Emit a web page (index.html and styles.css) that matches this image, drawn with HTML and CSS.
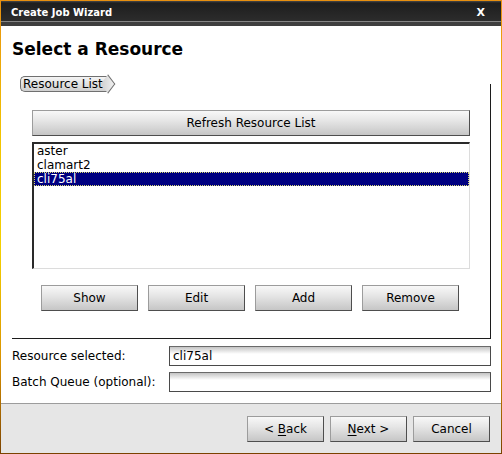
FILE: index.html
```html
<!DOCTYPE html>
<html>
<head>
<meta charset="utf-8">
<link rel="stylesheet" href="styles.css">
</head>
<body>
<div class="window">
  <div class="titlebar">
    <span class="title">Create Job Wizard</span>
    <span class="close">X</span>
  </div>
  <div class="content">
    <h1 class="heading">Select a Resource</h1>
    <div class="crumb"><span class="crumb-label">Resource List</span></div>
    <div class="panel">
      <button class="btn btn-wide">Refresh Resource List</button>
      <ul class="list">
        <li class="item">aster</li>
        <li class="item">clamart2</li>
        <li class="item selected">cli75al</li>
      </ul>
      <div class="actions">
        <button class="btn btn-action">Show</button>
        <button class="btn btn-action">Edit</button>
        <button class="btn btn-action">Add</button>
        <button class="btn btn-action">Remove</button>
      </div>
    </div>
    <div class="form">
      <div class="row">
        <label class="label">Resource selected:</label>
        <div class="input">cli75al</div>
      </div>
      <div class="row">
        <label class="label">Batch Queue (optional):</label>
        <div class="input"></div>
      </div>
    </div>
  </div>
  <div class="footer">
    <button class="btn btn-nav">&lt; <u>B</u>ack</button>
    <button class="btn btn-nav"><u>N</u>ext &gt;</button>
    <button class="btn btn-nav">Cancel</button>
  </div>
</div>
</body>
</html>
```

FILE: styles.css
```css
* { box-sizing: border-box; }
html, body { margin: 0; padding: 0; }
body {
  width: 502px;
  height: 454px;
  font-family: "DejaVu Sans", "Noto Sans", sans-serif;
  font-size: 12px;
  color: #000;
  background: #fff;
}
.window {
  width: 502px;
  height: 454px;
  padding: 1px;
  display: flex;
  flex-direction: column;
  background: linear-gradient(to bottom, #e89010 0px, #f2c400 30%, #f4d000 55%, #d89000 80%, #7a4200 100%);
}
.titlebar {
  height: 25px;
  flex: none;
  display: flex;
  align-items: flex-start;
  justify-content: space-between;
  padding: 5px 16px 0 10px;
  background: linear-gradient(to bottom, #4a4a4a 0px, #1e1e1e 2px, #2c2c2c 20px, #858585 20px, #858585 21px, #3e3e3e 21px, #3e3e3e 25px);
  color: #fff;
}
.title {
  font-weight: bold;
  font-size: 10px;
  line-height: 13px;
}
.close {
  font-weight: bold;
  font-size: 11px;
  line-height: 13px;
}
.content {
  flex: 1;
  background: #fff;
  padding: 0 10px 0 11px;
}
.heading {
  margin: 13px 0 0 0;
  font-size: 17px;
  line-height: 20px;
  font-weight: bold;
}
.crumb {
  position: relative;
  z-index: 1;
  margin: 17px 0 0 8px;
  height: 16px;
  width: 95px;
}
.crumb-label {
  position: relative;
  display: block;
  height: 16px;
  width: 88px;
  padding-left: 2px;
  line-height: 14px;
  border: 1px solid #707070;
  border-right: none;
  border-radius: 5px 0 0 5px;
  background: linear-gradient(to bottom, #f4f4f4, #cfcfcf);
}
.crumb-label::after {
  content: "";
  position: absolute;
  top: 1px;
  right: -6px;
  width: 11px;
  height: 11px;
  border-top: 1px solid #707070;
  border-right: 1px solid #707070;
  background: linear-gradient(45deg, #cfcfcf, #f0f0f0);
  transform: rotate(45deg) skew(8deg, 8deg);
}
.panel {
  margin-top: -8px;
  width: 479px;
  padding: 26px 20px 27px 20px;
  border-right: 1px solid #1c1c1c;
  border-bottom: 1px solid #1c1c1c;
}
.btn {
  font-family: "DejaVu Sans", "Noto Sans", sans-serif;
  font-size: 12px;
  color: #000;
  height: 26px;
  padding: 0;
  border: 1px solid #9c9c9c;
  border-right-color: #4e4e4e;
  border-bottom-color: #4e4e4e;
  background: linear-gradient(to bottom, #f8f8f8 0%, #e6e6e6 40%, #c6c6c6 100%);
}
.btn-wide {
  display: block;
  width: 438px;
}
.list {
  list-style: none;
  margin: 6px 0 0 0;
  padding: 0;
  height: 127px;
  border-top: 2px solid #2a2a2a;
  border-left: 2px solid #2a2a2a;
  border-right: 1px solid #dcdcdc;
  border-bottom: 1px solid #dcdcdc;
}
.item {
  height: 14px;
  line-height: 14px;
  padding-left: 3px;
}
.selected {
  background: #000080;
  color: #fff;
  outline: 1px dotted #d8d870;
  outline-offset: -1px;
}
.actions {
  display: flex;
  gap: 10px;
  margin-top: 16px;
  padding-left: 9px;
}
.btn-action {
  width: 97px;
}
.form {
  padding-top: 7px;
  display: flex;
  flex-direction: column;
  gap: 6px;
}
.row {
  display: flex;
  align-items: center;
  height: 20px;
}
.label {
  width: 157px;
  flex: none;
}
.input {
  width: 323px;
  height: 20px;
  padding-left: 3px;
  line-height: 18px;
  border: 1px solid #4a4a4a;
  border-top-color: #6a6a6a;
  background: linear-gradient(to bottom, #c4c4c4 0px, #ffffff 7px);
}
.footer {
  height: 50px;
  flex: none;
  border-top: 1px solid #9c9c9c;
  background: #e6e6e6;
  display: flex;
  justify-content: flex-end;
  align-items: flex-start;
  gap: 6px;
  padding: 12px 11px 0 0;
}
.btn-nav {
  width: 77px;
}
u { text-decoration: underline; text-underline-offset: 2px; }
```
